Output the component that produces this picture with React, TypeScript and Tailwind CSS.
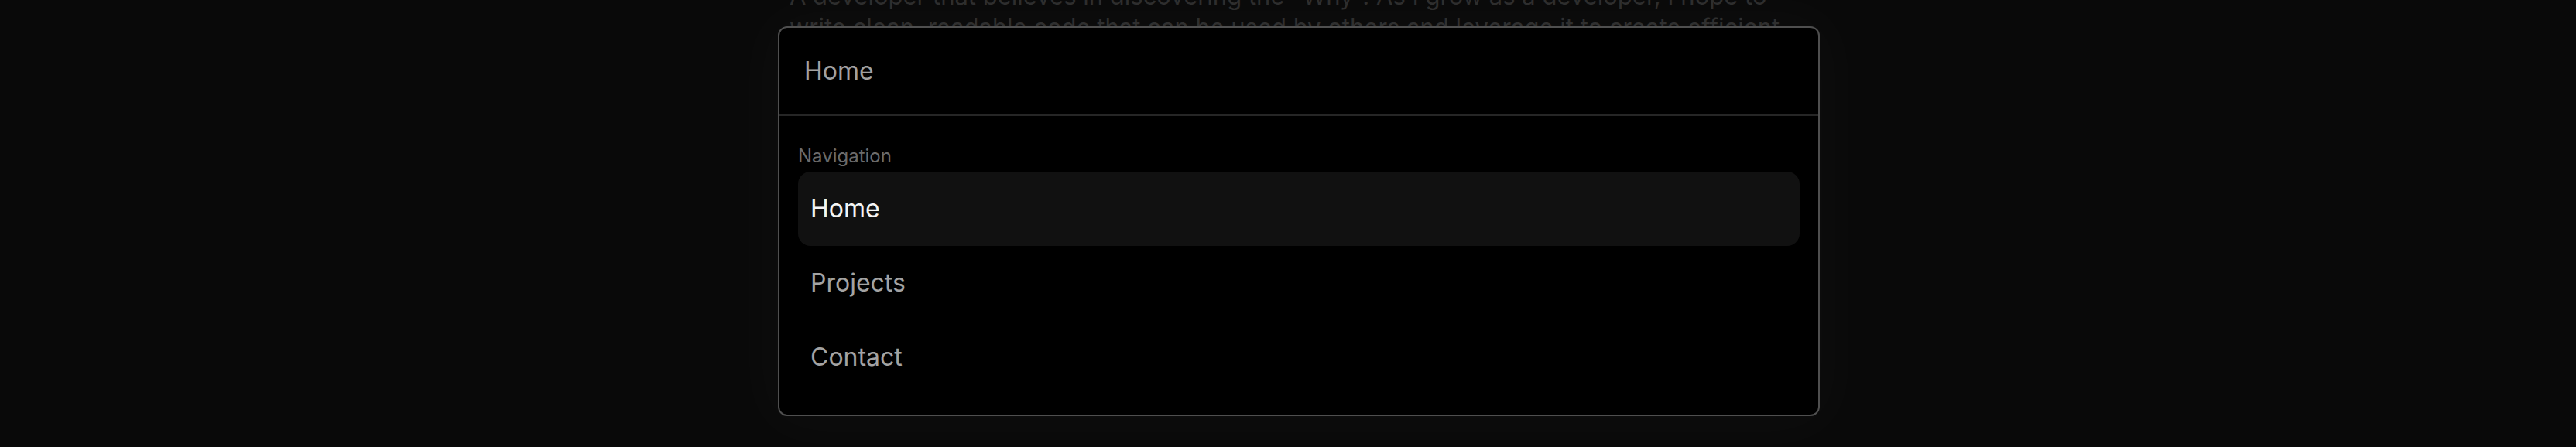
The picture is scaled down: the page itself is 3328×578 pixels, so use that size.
import { useState } from 'react'

const items = [
  { label: 'Home' },
  { label: 'Projects' },
  { label: 'Contact' },
]

const CommandMenu = () => {
  const [active, setActive] = useState(0)

  return (
    <div className="w-[1346px] rounded-[12px] border-2 border-[#4f4f4f] bg-black shadow-[0_0_80px_20px_rgba(255,255,255,0.025)]">
      {/* Search input */}
      <div className="flex h-[114px] items-center border-b-2 border-[#262626] px-[32px]">
        <span className="text-[32px] leading-none text-[#a1a1a1]">Home</span>
      </div>

      {/* List */}
      <div className="px-[24px] pt-[36px] pb-[26px]">
        <div className="mb-[4px] h-[32px] text-[24px] leading-[32px] text-[#6b6b6b]">Navigation</div>
        <div className="flex flex-col">
          {items.map((item, index) => (
            <div
              key={item.label}
              onMouseEnter={() => setActive(index)}
              className={`flex h-[96px] cursor-pointer items-center rounded-[16px] px-[16px] text-[32px] leading-none
                ${index === active ? 'bg-[#111111] text-[#f5f5f5]' : 'text-[#a3a3a3]'}`}
            >
              {item.label}
            </div>
          ))}
        </div>
      </div>
    </div>
  )
}

export default function App() {
  return (
    <div className="relative h-[578px] w-full overflow-hidden bg-[#090909] font-['Inter',sans-serif]">
      {/* Page behind the dialog */}
      <div className="mx-auto -mt-[25px] w-[1288px] text-[31px] leading-[40px] text-[#2d2d2d]">
        <p>
          A developer that believes in discovering the "Why". As I grow as a developer, I hope to write clean, readable
          code that can be used by others and leverage it to create efficient and maintainable software for everyone.
        </p>
      </div>

      {/* Dialog */}
      <div className="absolute inset-0 flex items-start justify-center pt-[34px] pl-[28px]">
        <CommandMenu />
      </div>
    </div>
  )
}
